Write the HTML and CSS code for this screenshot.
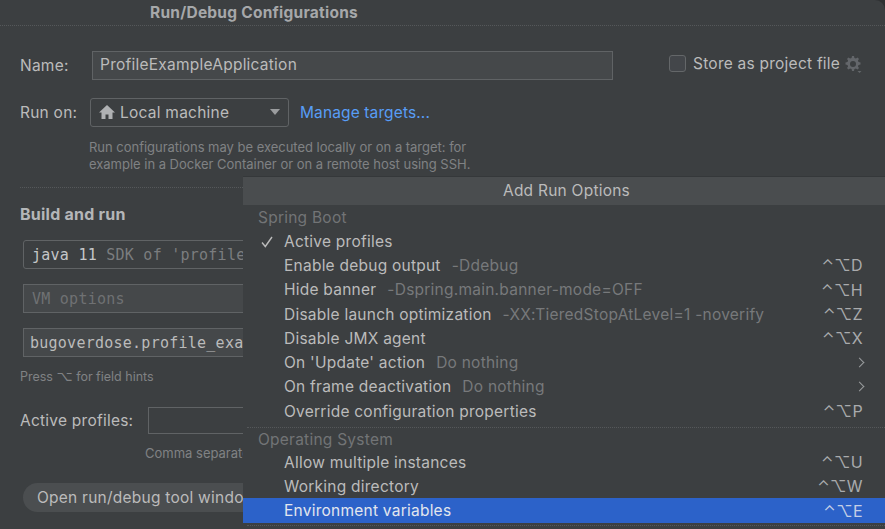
FILE: index.html
```html
<!DOCTYPE html>
<html lang="en">
<head>
    <meta charset="UTF-8">
    <meta name="viewport" content="width=device-width, initial-scale=1.0">
    <title>Run/Debug Configurations</title>
    <link rel="stylesheet" href="styles.css">
</head>
<body>
    <div class="dialog">
        <div class="title-bar">Run/Debug Configurations</div>

        <div class="name-row">
            <label class="field-label name-label">Name:</label>
            <div class="name-input">ProfileExampleApplication</div>
            <div class="store-option">
                <span class="checkbox"></span>
                <span>Store as project file</span>
                <svg class="gear" width="18" height="18" viewBox="0 0 18 18">
                    <path fill="#63666a" fill-rule="evenodd" d="M8 1h2l.4 2 1.5.6 1.7-1.1 1.4 1.4-1.1 1.7.6 1.5 2 .4v2l-2 .4-.6 1.5 1.1 1.7-1.4 1.4-1.7-1.1-1.500.6-.4 2H8l-.4-2-1.500-.6-1.700 1.100L3 13.100l1.100-1.700-.6-1.500-2-.4v-2l2-.4.6-1.500L3 3.900l1.400-1.400 1.700 1.100 1.500-.6zM9 6a3 3 0 1 0 0 6 3 3 0 0 0 0-6z"/>
                    <path fill="#63666a" d="M13.500 16h4l-2 2z"/>
                </svg>
            </div>
        </div>

        <div class="run-row">
            <label class="field-label run-label">Run on:</label>
            <div class="run-select">
                <svg width="16" height="14" viewBox="0 0 16 14">
                    <path fill="#afb1b3" d="M8 0 0 7.500h2.500V14h4V9.500h3V14h4V7.500H16z"/>
                </svg>
                <span class="run-value">Local machine</span>
                <span class="caret"></span>
            </div>
            <a class="link">Manage targets...</a>
        </div>

        <p class="run-hint">Run configurations may be executed locally or on a target: for<br>example in a Docker Container or on a remote host using SSH.</p>

        <div class="divider"></div>

        <h2 class="section-title">Build and run</h2>

        <div class="mono-input java-input"><b>java 11</b> <span class="dim">SDK of 'profile</span></div>
        <div class="mono-input vm-input">VM options</div>
        <div class="mono-input main-input">bugoverdose.profile_exa</div>

        <p class="field-hint">Press <span class="sym">⌥</span> for field hints</p>

        <div class="profiles-row">
            <label class="field-label">Active profiles:</label>
            <div class="profiles-input"></div>
        </div>
        <p class="profiles-hint">Comma separate</p>

        <div class="tag-button">Open run/debug tool windo</div>
    </div>

    <div class="popup">
        <div class="popup-title">Add Run Options</div>
        <div class="group-label first">Spring Boot</div>
        <div class="item"><svg class="check" width="12" height="12" viewBox="0 0 12 12"><path fill="none" stroke="#bbbbbb" stroke-width="1.400" d="M1 6.500 4.300 10.500 11 1"/></svg>Active profiles</div>
        <div class="item">Enable debug output<span class="note">-Ddebug</span><span class="keys">⌃⌥D</span></div>
        <div class="item">Hide banner<span class="note">-Dspring.main.banner-mode=OFF</span><span class="keys">⌃⌥H</span></div>
        <div class="item">Disable launch optimization<span class="note">-XX:TieredStopAtLevel=1 -noverify</span><span class="keys">⌃⌥Z</span></div>
        <div class="item">Disable JMX agent<span class="keys">⌃⌥X</span></div>
        <div class="item">On 'Update' action<span class="note">Do nothing</span><span class="arrow"></span></div>
        <div class="item">On frame deactivation<span class="note">Do nothing</span><span class="arrow"></span></div>
        <div class="item">Override configuration properties<span class="keys">⌃⌥P</span></div>
        <div class="popup-sep"></div>
        <div class="group-label">Operating System</div>
        <div class="item">Allow multiple instances<span class="keys">⌃⌥U</span></div>
        <div class="item">Working directory<span class="keys">⌃⌥W</span></div>
        <div class="item selected">Environment variables<span class="keys">⌃⌥E</span></div>
        <div class="popup-sep last"></div>
    </div>
</body>
</html>
```

FILE: styles.css
```css
html, body {
    margin: 0;
    padding: 0;
    height: 100%;
    overflow: hidden;
}
html {
    background-color: #2f3133;
}
body {
    position: relative;
    color: #bbbbbb;
    font-family: 'Inter', 'DejaVu Sans', sans-serif;
    font-size: 15.500px;
    letter-spacing: 0.240px;
}
p, h2 {
    margin: 0;
}
.dialog {
    height: 529px;
    overflow: hidden;
    background-color: #3c3f41;
    border-top-right-radius: 10px;
}
.title-bar {
    height: 25px;
    border-bottom: 1px dotted #55585a;
    padding-left: 150px;
    line-height: 25px;
    font-weight: 700;
    color: #a6a8aa;
}
.field-label {
    color: #bbbbbb;
}
.name-row {
    display: flex;
    align-items: center;
    margin-top: 24px;
    padding-left: 20px;
    height: 30px;
}
.name-label {
    width: 72px;
}
.name-input {
    width: 512px;
    height: 27px;
    line-height: 26px;
    padding-left: 7px;
    border: 1px solid #606365;
    background-color: #45484a;
}
.store-option {
    display: flex;
    align-items: center;
    gap: 7px;
    margin-left: 56px;
    margin-top: -3px;
}
.checkbox {
    width: 15px;
    height: 15px;
    border: 1px solid #646769;
    border-radius: 3px;
    background-color: #43464a;
}
.gear {
    margin-left: -3px;
    margin-top: 1px;
}
.run-row {
    display: flex;
    align-items: center;
    margin-top: 17px;
    padding-left: 20px;
    height: 30px;
}
.run-label {
    width: 70px;
}
.run-select {
    display: flex;
    align-items: center;
    width: 181px;
    height: 27px;
    padding: 0 8px;
    border: 1px solid #606365;
    border-radius: 3px;
}
.run-value {
    margin-left: 5px;
    flex: 1;
}
.caret {
    width: 0;
    height: 0;
    border-left: 5px solid transparent;
    border-right: 5px solid transparent;
    border-top: 6px solid #9a9c9e;
}
.link {
    margin-left: 11px;
    color: #589df6;
    letter-spacing: 0.120px;
}
.run-hint {
    margin-top: 12px;
    padding-left: 89px;
    font-size: 13px;
    letter-spacing: -0.020px;
    line-height: 17px;
    color: #808284;
}
.divider {
    margin: 14px 0 0 20px;
    border-top: 1px dotted #55585a;
}
.section-title {
    margin: 16px 0 0 20px;
    font-size: 16px;
    line-height: 20px;
    font-weight: 700;
    color: #b4b6b8;
}
.mono-input {
    margin-left: 23px;
    height: 27px;
    line-height: 29px;
    width: 400px;
    padding-left: 8px;
    border: 1px solid #606365;
    font-family: 'DejaVu Sans Mono', monospace;
    font-size: 15px;
    letter-spacing: 0.250px;
    white-space: nowrap;
    overflow: hidden;
}
.java-input {
    margin-top: 16px;
    border-radius: 3px;
}
.java-input b {
    font-weight: 400;
    color: #c4c6c8;
}
.dim {
    color: #7b7d7f;
}
.vm-input {
    margin-top: 15px;
    background-color: #45484a;
    color: #6f7173;
}
.main-input {
    margin-top: 15px;
    background-color: #45484a;
    padding-left: 6px;
}
.field-hint {
    margin: 10px 0 0 20px;
    font-size: 12.500px;
    letter-spacing: 0;
    line-height: 18px;
    color: #808284;
}
.sym {
    font-family: 'DejaVu Sans', sans-serif;
    font-size: 14px;
}
.profiles-row {
    display: flex;
    align-items: center;
    margin: 20px 0 0 20px;
    height: 28px;
}
.profiles-row .field-label {
    width: 128px;
}
.profiles-input {
    width: 300px;
    height: 25px;
    border: 1px solid #606365;
}
.profiles-hint {
    margin: 10px 0 0 145px;
    font-size: 13px;
    letter-spacing: 0;
    line-height: 18px;
    color: #808284;
}
.tag-button {
    margin: 21px 0 0 23px;
    width: 400px;
    height: 29px;
    padding-left: 14px;
    line-height: 29px;
    border-radius: 15px;
    background-color: #4b4e50;
    white-space: nowrap;
}
.popup {
    position: absolute;
    left: 243px;
    top: 176px;
    width: 642px;
    height: 353px;
    background-color: #3c3f41;
    border-top: 1px solid #35383a;
    box-sizing: border-box;
}
.popup-title {
    height: 28px;
    line-height: 27px;
    padding-left: 5px;
    text-align: center;
    background-color: #4a4d4f;
}
.group-label {
    padding: 2px 0 0 15px;
    height: 20px;
    line-height: 20px;
    color: #727476;
}
.group-label.first {
    padding-top: 0;
    margin-top: 2px;
    height: 22px;
    line-height: 22px;
}
.item {
    position: relative;
    display: flex;
    align-items: center;
    height: 24.300px;
    padding: 0 22px 0 41px;
    white-space: nowrap;
}
.check {
    position: absolute;
    left: 18px;
    top: 7px;
}
.note {
    margin-left: 11px;
    color: #77797b;
}
.keys {
    margin-left: auto;
    font-size: 16px;
    letter-spacing: 0.400px;
    color: #a9abad;
}
.arrow {
    margin-left: auto;
    width: 6px;
    height: 6px;
    border-top: 1.500px solid #9a9c9e;
    border-right: 1.500px solid #9a9c9e;
    transform: rotate(45deg);
}
.popup-sep {
    margin: 3.500px 0 0 4px;
    border-top: 1px dotted #55585a;
}
.popup-sep.last {
    margin-top: 2px;
}
.selected {
    background-color: #2c62c9;
    color: #e2e6ee;
}
.selected .keys {
    color: #c4cfe6;
}
```
